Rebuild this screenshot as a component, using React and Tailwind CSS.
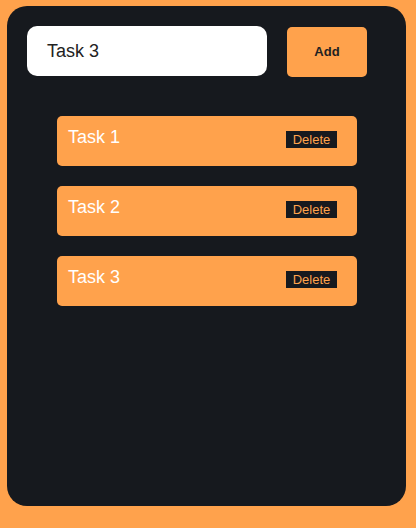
export default function App() {
  const tasks = ["Task 1", "Task 2", "Task 3"];
  return (
    <div className="w-[416px] h-[528px] bg-[#ffa24c] pt-[6px] pl-[7px]" style={{ fontFamily: '"Liberation Sans", Arial, sans-serif' }}>
      <div className="w-[399px] h-[500px] bg-[#16191e] rounded-[20px] p-[20px]">
        <div className="flex items-start gap-[20px]">
          <div className="w-[240px] h-[50px] bg-white rounded-[10px] flex items-center px-[20px] text-[18px] text-[#222]">
            Task 3
          </div>
          <button className="mt-[1px] w-[80px] h-[50px] bg-[#ffa24c] rounded-[5px] text-[13px] font-bold text-[#222] flex items-center justify-center">
            Add
          </button>
        </div>
        <div className="mt-[39px] flex flex-col gap-[20px] pl-[30px]">
          {tasks.map((t) => (
            <div key={t} className="w-[300px] h-[50px] bg-[#ffa24c] rounded-[5px] flex items-start justify-between pl-[11px] pr-[20px] pt-[11px]">
              <span className="text-[18px] text-white leading-[21px]">{t}</span>
              <span className="mt-[4px] w-[51px] h-[17px] bg-[#16191e] text-[#ffa24c] text-[13px] leading-[17px] flex items-center justify-center">
                Delete
              </span>
            </div>
          ))}
        </div>
      </div>
    </div>
  );
}
